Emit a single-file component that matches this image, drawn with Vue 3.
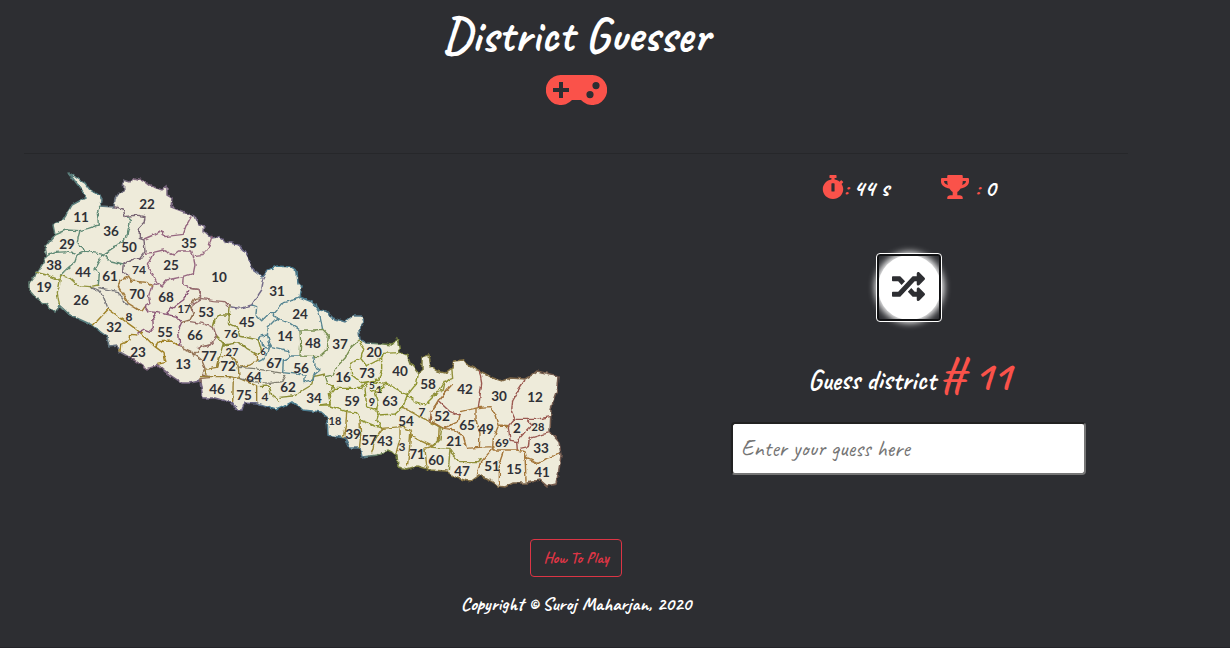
<script setup>
const coast = 'M68 172L80 180L85 183L90 190L99 195L102 200L101 206L114 207L115 199L119 193L124 191L123 180L129 182L135 178L143 180L151 186L162 190L167 186L167 195L172 198L171 207L187 213L194 216L198 225L205 226L204 231L212 238L218 237L227 242L238 245L245 253L250 262L253 270L262 277L267 270L277 266L290 267L297 272L298 283L302 287L300 297L312 302L319 310L326 311L333 318L345 322L353 316L362 316L364 322L359 330L360 340L366 343L383 344L392 345L395 341L397 338L400 352L407 355L410 363L418 373L422 370L422 357L429 355L431 367L437 371L445 373L452 368L454 361L463 360L466 364L478 370L493 378L502 381L510 378L525 379L532 375L537 371L559 376L558 387L554 398L551 410L550 432L559 442L561 455L559 470L556 484L547 486L540 480L527 483L513 483L505 487L498 486L493 482L480 475L470 482L455 477L446 471L430 470L417 466L407 469L398 467L397 455L388 450L377 455L362 457L360 448L350 448L345 438L328 435L327 417L321 412L303 410L292 402L283 407L276 410L257 404L244 403L242 410L237 410L232 403L215 398L203 398L200 381L190 383L182 383L170 375L158 365L147 369L134 360L120 352L117 345L109 346L107 337L92 325L70 315L59 305L56 312L47 305L35 297L29 290L29 283L38 271L47 257L45 247L55 235L53 225L65 217L72 205L87 197L78 185Z'

// Internal district boundaries, grouped by sheet; each sheet is drawn at three times map scale.
const sheets = [
  { at: [20, 165], lines: [
    ['#608a76', 'M240 122L232 140L235 180L205 190L180 197L140 195L105 210M180 197L175 215L172 232L198 258M80 272L105 262L150 260L175 268L198 258L215 262L250 268L285 245L320 215L332 165L322 155M172 268L165 290L140 312L122 330M250 268L270 288L310 297M250 268L235 290L222 315L238 325L235 360'],
    ['#796675', 'M282 125L310 132L315 155L350 150L375 155L372 175L358 190L358 220L372 225L375 260L360 280L340 282L310 297L308 320L325 332'],
    ['#966780', 'M372 222L400 210L425 197L435 215L490 208L500 180L515 152M375 265L400 262L430 255L460 270L475 258L515 258L520 275L545 272L565 250L577 210M400 265L382 300L400 330L412 355M395 365L412 355L425 365L440 345L490 335L520 325L525 300L520 275M395 365L385 395L390 415L375 425M490 335L488 358L515 370L540 375L545 398'],
    ['#a17a3c', 'M325 332L335 348L380 352L395 365M325 335L300 345L295 365L310 390L325 415L365 440L375 425'],
    ['#92943d', 'M50 322L80 330L118 345M122 330L118 360L112 385L118 420M122 330L150 340L175 362L210 365L235 360'],
    ['#77767b', 'M210 365L240 378L250 395L265 432M235 368L295 380L315 415L325 420']
  ]},
  { at: [20, 275], lines: [
    ['#a08226', 'M265 102L345 160L375 185L405 215M265 102L218 152M300 230L302 208L330 195L332 178L352 180M405 215L432 235L438 262L412 268M405 215L415 200L455 198L480 215'],
    ['#8c5878', 'M352 175L370 165L390 172L400 160L398 130L410 112M375 95L385 110L410 112L440 118L455 100L490 75L510 45M440 118L470 125L485 142L475 165L480 215'],
    ['#927052', 'M485 142L510 135L520 115L510 92L525 70L545 68M480 215L515 230L520 240L545 215L570 210M520 235L545 255L555 280L545 300L570 305M540 320L540 310L570 308']
  ]},
  { at: [190, 280], lines: [
    ['#956c69', 'M35 55L70 62L105 65L120 80M35 55L10 70L5 100M0 25L25 28L35 50M0 125L35 130L70 142L80 170L60 195L20 205'],
    ['#736a88', 'M120 80L150 85L185 75L215 30L220 0L225 -10'],
    ['#8b8c35', 'M120 80L118 105L90 105L75 120L70 140M118 105L115 130L145 145L148 168L205 180M80 170L100 190L90 225L80 260M100 195L150 188L170 205L200 222L215 215L205 180M410 310L430 320L415 340L420 370L390 375M268 352L310 348L365 315L370 290L405 282M205 320L238 318L245 345L270 365'],
    ['#9b8136', 'M88 232L115 228L140 240L145 262L180 255L205 240L195 222M145 262L148 295L120 290L30 290M85 232L80 262L45 268L48 285M130 295L128 368M148 295L200 318L200 370'],
    ['#568592', 'M185 75L200 80L198 105L215 122L240 98L255 98L280 68L310 60L332 52M378 70L390 110L398 148M250 98L260 115L300 130L330 150M260 115L235 140L232 165L240 190L245 200L295 212L300 228L330 228M205 180L210 168L235 165M215 180L218 200L235 205L225 235L205 245M235 205L240 190M300 230L280 240L278 278L345 285L345 305L370 300L372 285L390 270L375 260L372 230'],
    ['#799052', 'M330 150L370 150L398 148L415 165L412 210L390 230L330 228L332 190L330 150M508 180L485 200L465 235L440 260L430 285L405 290L410 310'],
    ['#807e70', 'M145 262L190 265L280 280M148 295L190 305L240 310L275 305L285 285']
  ]},
  { at: [320, 320], lines: [
    ['#8e9430', 'M20 190L45 205L125 205L135 190L160 180M45 205L28 225L30 255L0 255M30 258L80 275L110 278L120 300L185 325L170 300L175 285M115 62L132 85L122 115L140 138L185 115L190 100L250 97M120 115L92 130L95 165L125 188L175 180L185 150L185 115M135 205L145 185L200 190L165 210L150 215M135 205L140 260L170 270L175 245L165 215L180 218L190 200M200 190L235 210L262 225L248 262L225 282L175 285L170 270M295 160L290 190L262 225L285 245L315 255L350 220L375 180L390 185'],
    ['#9d8935', 'M248 262L290 285L330 305M330 305L358 320L355 365L335 378L275 350L270 330L245 320L185 325M80 275L78 310L70 350M120 300L122 350L118 385M185 325L165 360L155 400M240 325L240 355L228 400M272 340L268 390L262 440M335 378L315 385L318 420L322 448'],
    ['#a06b42', 'M330 305L335 270L360 240L385 205']
  ]},
  { at: [430, 340], lines: [
    ['#92913c', 'M65 85L68 115L45 125L40 150L0 170M5 322L60 325L65 340L90 365L145 365L155 355M60 325L55 392M5 245L35 265L30 300L5 322'],
    ['#9b5950', 'M28 185L60 215L90 225M148 90L155 130L145 203M285 120L265 150L248 180L245 215L255 238L320 238L360 230M235 260L240 300L260 305L290 270L305 255L290 240M255 238L235 260M270 325L295 320L298 295L358 278M260 305L262 330'],
    ['#a5773a', 'M65 135L25 180L5 215M90 225L85 245L40 265L5 245M90 215L135 205L145 203M138 205L138 240L150 280L148 322M145 203L180 200L195 225L205 258L190 295L188 320M205 258L235 260M148 322L188 320L190 330L260 330L285 335L290 355L325 370L350 355L390 342M285 340L288 425M222 330L208 370L208 435M188 325L150 370L142 405M40 265L75 270L100 290L110 325L148 322']
  ]}
]

const districts = [
  [22,147,204],[11,81,217],[36,111,231],[29,67,244],[50,129,247],[35,189,243],[38,54,265],[44,83,272],[61,110,276],[74,139,270,12],[25,171,265],[10,219,277],[19,44,287],[26,81,300],[70,137,294],[68,166,297],[17,184,309,11],[53,206,312],[31,277,291],[24,300,314],[8,129,317,12],[32,114,327],[55,165,332],[66,195,335],[45,247,322],[76,231,334,12],[14,285,336],[48,313,343],[37,340,344],[23,138,352],[13,183,364],[77,209,356],[27,232,352,11],[6,263,352,9],[67,274,363],[72,228,366],[56,301,368],[64,254,377],[46,217,389],[75,244,395],[4,265,397,12],[62,288,387],[34,314,398],[20,374,352],[16,343,377],[73,367,373],[40,400,371],[58,428,384],[5,372,385,10],[1,379,390,9],[9,372,402,11],[59,352,401],[63,390,401],[54,406,421],[7,422,412,12],[18,335,421,11],[39,353,434],[57,369,440],[43,385,441],[3,402,447,12],[71,417,454],[60,436,460],[42,465,389],[30,499,396],[12,535,397],[52,442,416],[65,467,425],[49,486,429],[2,517,428],[28,538,427,11],[69,502,443,12],[33,541,448],[21,454,441],[47,462,471],[51,492,466],[15,514,469],[41,542,472]
]
</script>

<template>
  <main class="page">
    <header class="header">
      <h1>District Guesser</h1>
      <svg class="gamepad" viewBox="0 0 61 30" aria-hidden="true">
        <path fill-rule="evenodd" d="M15 0H46A15 15 0 1 1 35 25H26A15 15 0 1 1 15 0ZM13 7V13H7V17H13V23H17V17H23V13H17V7ZM50 7a3.6 3.6 0 1 0 0 7.2a3.6 3.6 0 1 0 0-7.2ZM44 16a3.6 3.6 0 1 0 0 7.2a3.6 3.6 0 1 0 0-7.2Z" />
      </svg>
    </header>

    <section class="game">
      <svg class="map" viewBox="24 165 546 330">
        <defs>
          <filter id="ragged" x="-2%" y="-2%" width="104%" height="104%" color-interpolation-filters="sRGB">
            <feTurbulence type="fractalNoise" baseFrequency="0.18" numOctaves="2" seed="4" result="noise" />
            <feDisplacementMap in="SourceGraphic" in2="noise" scale="4" xChannelSelector="R" yChannelSelector="G" />
            <feGaussianBlur stdDeviation="0.4" />
          </filter>
          <linearGradient id="coast-tint" x1="28" x2="560" y1="0" y2="0" gradientUnits="userSpaceOnUse">
            <stop offset="0" stop-color="#617f72" />
            <stop offset=".13" stop-color="#557e83" />
            <stop offset=".2" stop-color="#80677e" />
            <stop offset=".42" stop-color="#6a6586" />
            <stop offset=".46" stop-color="#457c90" />
            <stop offset=".63" stop-color="#55798a" />
            <stop offset=".68" stop-color="#75853f" />
            <stop offset=".8" stop-color="#887542" />
            <stop offset="1" stop-color="#765b50" />
          </linearGradient>
        </defs>
        <g filter="url(#ragged)" class="land">
          <path class="coast" :d="coast" />
          <g v-for="(sheet, i) in sheets" :key="i" :transform="`translate(${sheet.at[0]} ${sheet.at[1]}) scale(.33333)`">
            <path v-for="(line, j) in sheet.lines" :key="j" class="border" :stroke="line[0]" :d="line[1]" />
          </g>
        </g>
        <text v-for="d in districts" :key="d[0]" class="label" :x="d[1]" :y="d[2] + (d[3] || 13.5) * 0.36" :font-size="d[3] || 13.5">{{ d[0] }}</text>
      </svg>

      <div class="panel">
        <div class="stats">
          <span class="stat timer">
            <svg width="22" height="24" viewBox="0 0 448 512" preserveAspectRatio="none"><path d="M432 304c0 114.900-93.100 208-208 208S16 418.900 16 304c0-104 76.300-190.200 176-205.500V64h-28c-6.600 0-12-5.400-12-12V12c0-6.600 5.400-12 12-12h120c6.600 0 12 5.400 12 12v40c0 6.600-5.400 12-12 12h-28v34.500c37.500 5.800 71.700 21.600 99.700 44.600l27.500-27.500c4.700-4.700 12.300-4.700 17 0l28.300 28.300c4.700 4.700 4.700 12.300 0 17l-29.400 29.400-.6.6C419.700 223.300 432 262.200 432 304zm-176 36V188.500c0-6.600-5.400-12-12-12h-40c-6.600 0-12 5.400-12 12V340c0 6.600 5.400 12 12 12h40c6.600 0 12-5.400 12-12z" /></svg>
            <i>:</i><b>44 s</b>
          </span>
          <span class="stat score">
            <svg width="28" height="24" viewBox="0 0 576 512" preserveAspectRatio="none"><path d="M552 64H448V24c0-13.300-10.700-24-24-24H152c-13.300 0-24 10.700-24 24v40H24C10.700 64 0 74.700 0 88v56c0 35.700 22.500 72.400 61.900 100.700 31.500 22.700 69.800 37.100 110 41.700C203.300 338.500 240 360 240 360v72h-48c-35.300 0-64 20.700-64 56v12c0 6.600 5.400 12 12 12h296c6.600 0 12-5.400 12-12v-12c0-35.300-28.700-56-64-56h-48v-72s36.700-21.500 68.100-73.600c40.300-4.600 78.600-19 110-41.700 39.300-28.300 61.900-65 61.900-100.700V88c0-13.300-10.700-24-24-24zM99.300 192.800C74.900 175.200 64 155.600 64 144v-16h64.200c1 32.600 5.800 61.200 12.800 86.200-15.100-5.200-29.200-12.400-41.700-21.400zM512 144c0 16.100-17.700 36.100-35.300 48.800-12.500 9-26.700 16.200-41.800 21.400 7-25 11.800-53.600 12.800-86.200H512v16z" /></svg>
            <i>:</i><b>0</b>
          </span>
        </div>

        <button class="shuffle" aria-label="Shuffle">
          <span class="disc">
            <svg width="33" height="33" viewBox="0 0 512 512"><path d="M504.971 359.029c9.373 9.373 9.373 24.569 0 33.941l-80 79.984c-15.010 15.010-40.971 4.490-40.971-16.971V416h-58.785a12.004 12.004 0 0 1-8.773-3.812l-70.556-75.596 53.333-57.143L352 336h32v-39.981c0-21.438 25.943-31.998 40.971-16.971l80 79.981zM12 176h84l52.781 56.551 53.333-57.143-70.556-75.596A11.999 11.999 0 0 0 122.785 96H12c-6.627 0-12 5.373-12 12v56c0 6.627 5.373 12 12 12zm372 0v39.984c0 21.460 25.961 31.980 40.971 16.971l80-79.984c9.373-9.373 9.373-24.569 0-33.941l-80-79.981C409.943 24.021 384 34.582 384 56.019V96h-58.785a12.004 12.004 0 0 0-8.773 3.812L96 336H12c-6.627 0-12 5.373-12 12v56c0 6.627 5.373 12 12 12h110.785c3.326 0 6.503-1.381 8.773-3.812L352 176h32z" /></svg>
          </span>
        </button>

        <h2 class="prompt"><span>Guess district</span><em># 11</em></h2>
        <input class="guess" type="text" placeholder="Enter your guess here" />
      </div>
    </section>

    <footer class="footer">
      <button class="help">How To Play</button>
      <p>Copyright © Suroj Maharjan, 2020</p>
    </footer>
  </main>
</template>

<style>
html, body { margin: 0; background: #2d2e32; overflow: hidden; }
</style>

<style scoped>
.page {
  box-sizing: border-box;
  width: 1230px;
  height: 648px;
  padding: 0 102px 0 24px;
  background: #2d2e32;
  color: #fff;
  font-family: "Caveat", Lato, "Open Sans", sans-serif;
  border-bottom: 1px solid #242429;
}
.header {
  box-sizing: border-box;
  height: 154px;
  padding-top: 10px;
  display: flex;
  flex-direction: column;
  align-items: center;
  border-bottom: 1px solid #26272a;
}
h1 { margin: 0 0 9px; height: 56px; font-size: 48px; line-height: 51px; font-weight: 700; white-space: nowrap; }
.gamepad { width: 61px; height: 30px; fill: #fa524a; }
.game { display: flex; height: 385px; padding-top: 11px; box-sizing: border-box; }
.map { flex: none; width: 546px; height: 330px; }
.coast { fill: #eeebda; stroke: url(#coast-tint); stroke-width: 1.5; }
.border { fill: none; stroke-width: 4.2; stroke-linejoin: round; }
.label { fill: #303137; font-family: Lato, sans-serif; font-weight: 700; text-anchor: middle; }
.panel { width: 354px; margin-left: 162px; display: flex; flex-direction: column; align-items: center; }
.stats { display: flex; width: 175px; height: 24px; margin-top: 10px; justify-content: space-between; }
.stat { display: flex; align-items: center; font-size: 24px; line-height: 24px; }
.stat svg { fill: #fa524a; flex: none; }
.stat i { color: #fa524a; font-weight: 700; font-style: normal; }
.timer i { margin: 2px 5px 0 0; }
.score { margin-right: 1px; }
.score i { margin: 2px 5px 0 6px; }
.stat b { font-weight: 700; padding-top: 2px; }
.shuffle {
  position: relative;
  box-sizing: border-box;
  width: 66px;
  height: 69px;
  margin-top: 54px;
  padding: 0;
  display: grid;
  place-items: center;
  border: 0;
  background: transparent;
}
.shuffle::after {
  content: "";
  position: absolute;
  inset: 0;
  border: 1px solid #fff;
  border-radius: 4px;
  box-shadow: inset 0 0 0 2px #111214;
}
.disc { width: 63px; height: 65px; border-radius: 50%; background: #fff; display: grid; place-items: center; box-shadow: 0 0 7px 3px #fff; }
.disc svg { fill: #2d2e32; margin: 0 2px 3px 0; }
.prompt { margin: 26px 0 0 1px; height: 54px; display: flex; align-items: baseline; font-size: 27.3px; line-height: 54px; font-weight: 700; white-space: nowrap; }
.prompt em { color: #fa524a; font-size: 41.5px; font-style: normal; margin-left: 5px; }
.guess {
  box-sizing: border-box;
  width: 355px;
  height: 53px;
  margin: 20px 0 0;
  align-self: flex-end;
  padding: 0 8px;
  border: 2px inset #767676;
  border-radius: 4px;
  background: #fff;
  font: 500 23px "Caveat", Lato, sans-serif;
}
.guess::placeholder { color: #757575; }
.footer { display: flex; flex-direction: column; align-items: center; }
.help {
  box-sizing: border-box;
  width: 92px;
  height: 38px;
  padding: 0;
  border: 1px solid #dc3545;
  border-radius: 4px;
  background: transparent;
  color: #dc3545;
  font: 600 16px "Caveat", Lato, sans-serif;
}
.footer p { margin: 17px 0 0; font-size: 19.2px; line-height: 20px; font-weight: 700; white-space: nowrap; }
</style>
